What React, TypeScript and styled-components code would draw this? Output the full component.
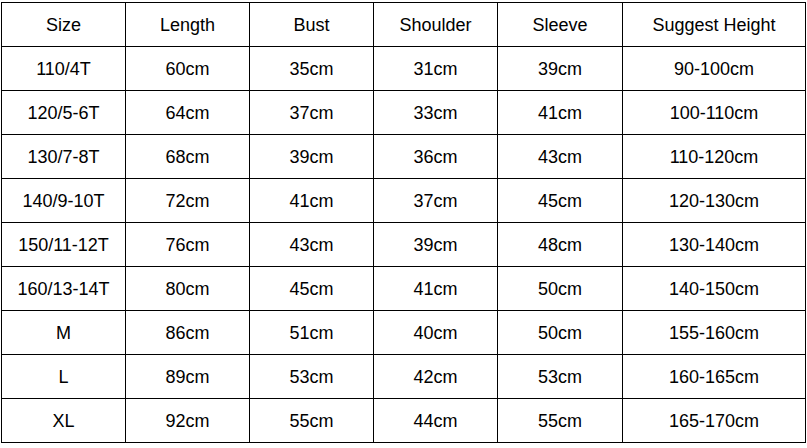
import React from "react";
import styled, { createGlobalStyle } from "styled-components";

const columns = ["Size", "Length", "Bust", "Shoulder", "Sleeve", "Suggest Height"];

const rows = [
  ["110/4T", "60cm", "35cm", "31cm", "39cm", "90-100cm"],
  ["120/5-6T", "64cm", "37cm", "33cm", "41cm", "100-110cm"],
  ["130/7-8T", "68cm", "39cm", "36cm", "43cm", "110-120cm"],
  ["140/9-10T", "72cm", "41cm", "37cm", "45cm", "120-130cm"],
  ["150/11-12T", "76cm", "43cm", "39cm", "48cm", "130-140cm"],
  ["160/13-14T", "80cm", "45cm", "41cm", "50cm", "140-150cm"],
  ["M", "86cm", "51cm", "40cm", "50cm", "155-160cm"],
  ["L", "89cm", "53cm", "42cm", "53cm", "160-165cm"],
  ["XL", "92cm", "55cm", "44cm", "55cm", "165-170cm"],
];

export default function App() {
  return (
    <>
      <GlobalStyle />
      <Page>
        <SizeChart>
          {columns.map((c) => (
            <Cell key={c}>{c}</Cell>
          ))}
          {rows.map((r) =>
            r.map((v, i) => <Cell key={r[0] + i}>{v}</Cell>)
          )}
        </SizeChart>
      </Page>
    </>
  );
}

const GlobalStyle = createGlobalStyle`
  html, body {
    margin: 0;
    padding: 0;
    background: #fff;
  }
`;

const Page = styled.div`
  width: 807px;
  height: 448px;
  padding: 2px 0 0 1px;
  box-sizing: border-box;
  background: #fff;
`;

const SizeChart = styled.div`
  display: grid;
  grid-template-columns: 123px 123px 123px 123px 124px 182px;
  grid-auto-rows: 43px;
  gap: 1px;
  padding: 1px;
  width: fit-content;
  background: #000;
`;

const Cell = styled.div`
  display: flex;
  align-items: center;
  justify-content: center;
  background: #fff;
  color: #000;
  font-family: "Liberation Sans", Arial, sans-serif;
  font-size: 18px;
  padding-top: 1px;
`;
